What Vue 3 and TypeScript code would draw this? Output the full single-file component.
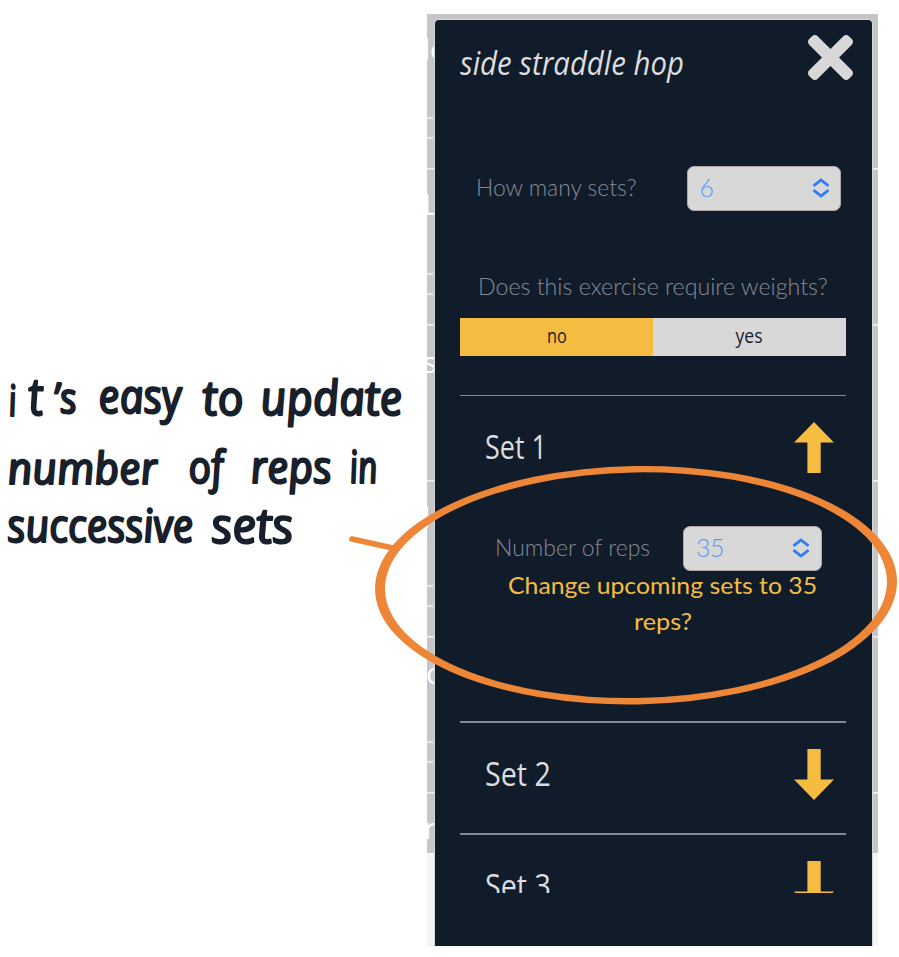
<script setup lang="ts">
import { ref, type Directive } from 'vue'

interface ExerciseSet {
  id: number
  open: boolean
  reps: number
}

const exercise = 'side straddle hop'
const setCount = ref(6)
const usesWeights = ref(false)
const sets = ref<ExerciseSet[]>([
  { id: 1, open: true, reps: 35 },
  { id: 2, open: false, reps: 35 },
  { id: 3, open: false, reps: 35 },
])

const closePath =
  'M242.72 256l100.07-100.07c12.28-12.28 12.28-32.19 0-44.48l-22.24-22.24c-12.28-12.28-32.19-12.28-44.48 0L176 189.28 75.93 89.21c-12.28-12.28-32.19-12.28-44.48 0L9.21 111.45c-12.28 12.28-12.28 32.19 0 44.48L109.28 256 9.21 356.07c-12.28 12.28-12.28 32.19 0 44.48l22.24 22.24c12.28 12.28 32.2 12.28 44.48 0L176 322.72l100.07 100.07c12.28 12.28 32.2 12.28 44.48 0l22.24-22.24c12.28-12.28 12.28-32.19 0-44.48L242.72 256z'

const thickRules = [118, 138, 274, 294, 586, 606, 742, 762]
const rowRules = [169, 325, 481, 637, 793]
const edgeLetters = [
  { t: 'd', x: 412.5, y: 60 },
  { t: 'e', x: 430, y: 60 },
  { t: 'L', x: 423, y: 215 },
  { t: 's', x: 423, y: 373 },
  { t: 'l', x: 423, y: 528 },
  { t: 'o', x: 426, y: 684 },
  { t: 'r', x: 424, y: 839 },
]

const note = [
  { t: 'i', x: 10, y: 416, w: 8, s: 43 },
  { t: 't', x: 30, y: 415, w: 15, s: 52 },
  { t: '’s', x: 55, y: 413, w: 23, s: 42 },
  { t: 'easy', x: 100, y: 413, w: 83, s: 47 },
  { t: 'to', x: 204, y: 415, w: 41, s: 48 },
  { t: 'update', x: 262, y: 415, w: 142, s: 48 },
  { t: 'number', x: 9, y: 484, w: 150, s: 44 },
  { t: 'of', x: 190, y: 483, w: 35, s: 45 },
  { t: 'reps', x: 252, y: 483, w: 81, s: 45 },
  { t: 'in', x: 351, y: 483, w: 28, s: 45 },
  { t: 'successive', x: 9, y: 542, w: 186, s: 46 },
  { t: 'sets', x: 213, y: 543, w: 82, s: 49 },
]

// Condenses or widens a line of text to the given width in pixels.
const vFit: Directive<HTMLElement, number> = {
  mounted(el, { value }) {
    el.style.transform = `scaleX(${value / el.offsetWidth})`
  },
}
</script>

<template>
  <main class="page">
    <section class="phone">
      <svg class="backdrop" width="899" height="957" viewBox="0 0 899 957">
        <rect x="427" y="14" width="451" height="839" fill="#c6c6c8" />
        <rect x="427" y="853" width="451" height="93" fill="#f5f5f5" />
        <rect v-for="y in thickRules" :key="y" x="427" :y="y - 1" width="6" height="2" fill="#e9e9ea" />
        <rect v-for="y in rowRules" :key="y" x="427" :y="y - 1" width="451" height="1.6" fill="#f0f0f1" />
        <svg x="427" y="14" width="7" height="900" viewBox="427 14 7 900">
          <text v-for="l in edgeLetters" :key="l.t" :x="l.x" :y="l.y" class="edge">{{ l.t }}</text>
        </svg>
      </svg>

      <div class="modal">
        <header class="header">
          <h1 v-fit="224" class="title">{{ exercise }}</h1>
          <svg class="close" viewBox="0 80 352 352"><path :d="closePath" fill="#d8d8d8" /></svg>
        </header>

        <div class="body">
          <div class="field count">
            <span v-fit="161" class="label">How many sets?</span>
            <div class="select wide">
              <span class="value">{{ setCount }}</span>
              <svg class="chev" viewBox="0 0 18 20"><path d="M1.5 7.8 9 2l7.5 5.8M1.5 12.2 9 18l7.5-5.8" /></svg>
            </div>
          </div>

          <div class="question"><span v-fit="350" class="label">Does this exercise require weights?</span></div>

          <div class="toggle">
            <button :class="{ on: !usesWeights }" @click="usesWeights = false"><span v-fit="20">no</span></button>
            <button :class="{ on: usesWeights }" @click="usesWeights = true"><span v-fit="27">yes</span></button>
          </div>

          <article v-for="s in sets" :key="s.id" class="set" :class="{ open: s.open }">
            <div class="set-head">
              <h2 v-fit="s.id === 1 ? 62 : 66" class="set-name">Set {{ s.id }}</h2>
              <svg class="arrow" viewBox="0 0 40 51">
                <path v-if="s.open" d="M20 0 40 20.5H26.7V51H13.4V20.5H0z" />
                <path v-else d="M20 51 40 30.5H26.7V0H13.4V30.5H0z" />
              </svg>
            </div>
            <div v-if="s.open" class="set-body">
              <div class="field reps">
                <span v-fit="155" class="label">Number of reps</span>
                <div class="select">
                  <span class="value">{{ s.reps }}</span>
                  <svg class="chev" viewBox="0 0 18 20"><path d="M1.5 7.8 9 2l7.5 5.8M1.5 12.2 9 18l7.5-5.8" /></svg>
                </div>
              </div>
              <div class="change">
                <span v-fit="309">Change upcoming sets to {{ s.reps }}</span>
                <span v-fit="58">reps?</span>
              </div>
            </div>
          </article>
        </div>
      </div>
    </section>

    <svg class="annotation" width="899" height="957" viewBox="0 0 899 957">
      <g v-for="n in note" :key="n.t" :transform="`translate(${n.x} ${n.y}) skewX(7)`">
        <text :textLength="n.w" :font-size="n.s" lengthAdjust="spacingAndGlyphs" class="note">{{ n.t }}</text>
      </g>
      <g fill="#ee8637" transform="rotate(-1 636.3 585.2)">
        <path fill-rule="evenodd" d="M375 585.2a261 119.2 0 1 0 522 0a261 119.2 0 1 0 -522 0zM385 585.2a251 112.8 0 1 0 502 0a251 112.8 0 1 0 -502 0z" />
      </g>
      <path d="M352 539 395 548.5" stroke="#ee8637" stroke-width="5.6" stroke-linecap="round" />
    </svg>
  </main>
</template>

<style>
body {
  background: #fff;
}
</style>

<style scoped>
.page {
  position: relative;
  box-sizing: border-box;
  width: 899px;
  height: 957px;
  padding: 14px 0 0 427px;
  overflow: hidden;
  background: #fff;
  font-family: Lato, "Open Sans", sans-serif;
}
.phone {
  box-sizing: border-box;
  width: 451px;
  height: 932px;
  padding: 6px 6px 0 7.5px;
}
.backdrop,
.annotation {
  position: absolute;
  top: 0;
  left: 0;
  pointer-events: none;
}
.edge {
  fill: #fff;
  font: 29px "Open Sans", sans-serif;
}
.modal {
  position: relative;
  box-sizing: border-box;
  height: 926px;
  padding: 15px 26px 0 25.5px;
  border-radius: 4px 4px 0 0;
  background: #111c2b;
  box-shadow: 0 0 0 1px #d5d8d9;
  clip-path: inset(-1px -1px 0 -1px);
}
.header {
  display: flex;
  justify-content: space-between;
  height: 45px;
}
.title,
.set-name {
  margin: 0;
  transform-origin: left;
  font-family: "Open Sans", sans-serif;
  font-weight: 400;
  color: #dddddf;
  white-space: nowrap;
}
.title {
  font-size: 32px;
  font-style: italic;
  line-height: 55px;
  height: 55px;
}
.close {
  width: 45px;
  height: 45px;
  margin-right: -7px;
}
.body {
  height: 813px;
  overflow: hidden;
}
.field {
  display: flex;
  align-items: center;
  justify-content: space-between;
  height: 45px;
}
.count {
  margin: 85.5px 5px 0 16px;
}
.label {
  display: inline-block;
  position: relative;
  top: -1px;
  transform-origin: left;
  font-size: 23px;
  font-weight: 300;
  line-height: 30px;
  color: #858b95;
  white-space: nowrap;
}
.select {
  box-sizing: border-box;
  display: flex;
  align-items: center;
  justify-content: space-between;
  width: 139px;
  height: 45px;
  padding: 0 11px 0 12px;
  border: 1.5px solid #b3a6aa;
  border-radius: 7px;
  background: #d8d8d8;
  font-size: 25px;
  font-weight: 300;
  color: #5d97f3;
}
.select.wide {
  width: 154.5px;
  padding-right: 10px;
}
.value {
  padding-bottom: 2px;
  letter-spacing: -0.5px;
}
.chev {
  width: 18px;
  height: 20px;
  fill: none;
  stroke: #2f7bfb;
  stroke-width: 2.8;
}
.question {
  height: 30px;
  margin: 61px 0 0 17.5px;
}
.toggle {
  display: grid;
  grid-template-columns: 1fr 1fr;
  height: 38px;
  margin-top: 16px;
  margin-bottom: 39px;
}
.toggle button {
  padding: 0 0 3px;
  border: 0;
  background: #d8d8d8;
  font: 19.5px "Open Sans", sans-serif;
  color: #16202e;
}
.toggle button.on {
  background: #f5bc42;
}
.toggle span {
  display: inline-block;
}
.set {
  box-sizing: border-box;
  height: 112px;
  border-top: 2px solid #808a9d;
}
.set.open {
  height: 326px;
  border-top-width: 1.5px;
}
.set-head {
  display: flex;
  justify-content: space-between;
  padding: 26px 12px 0 25px;
}
.set-name {
  height: 51px;
  font-size: 33px;
  line-height: 50px;
}
.arrow {
  width: 40px;
  height: 51px;
  fill: #f5bc42;
}
.set-body {
  padding-top: 53px;
}
.reps {
  padding: 0 24px 0 35px;
}
.change {
  display: flex;
  flex-direction: column;
  align-items: center;
  padding-left: 19.5px;
  margin-top: -4px;
  font-size: 23.5px;
  line-height: 36px;
  color: #f5bc42;
}
.note {
  fill: #17202b;
  stroke: #17202b;
  stroke-width: 2.2;
  stroke-linejoin: round;
  font-family: "Open Sans", sans-serif;
  font-style: italic;
  font-weight: 500;
}
</style>
